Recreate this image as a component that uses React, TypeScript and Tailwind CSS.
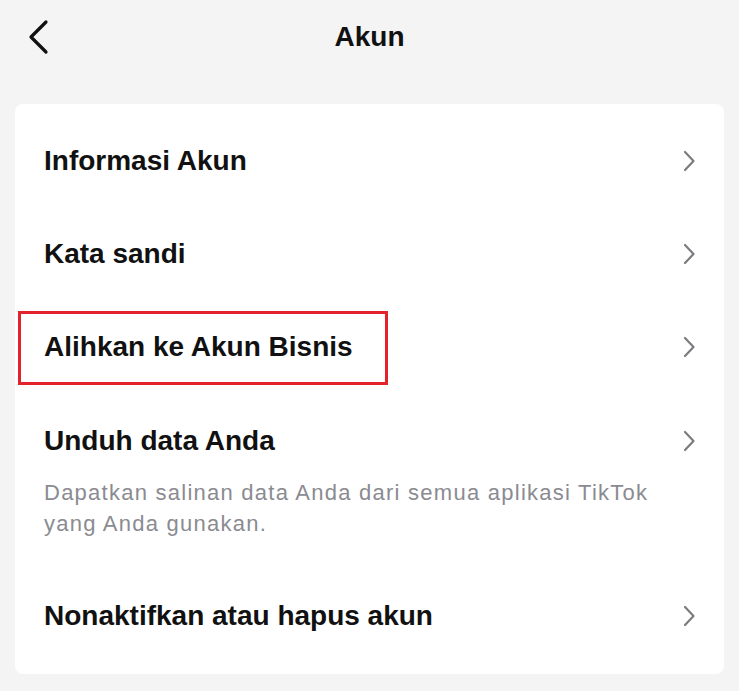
import { ReactNode } from "react";

type RowProps = {
    label: string;
    children?: ReactNode;
};

function Chevron() {
    return (
        <svg width="14" height="22" viewBox="0 0 14 22" fill="none" className="shrink-0">
            <path d="M3 2 L11.5 11 L3 20" stroke="#7c7c80" strokeWidth="2.2" strokeLinecap="round" strokeLinejoin="round" />
        </svg>
    );
}

function Row({ label, children }: RowProps) {
    return (
        <div className="relative flex h-[93px] items-center justify-between pl-[29px] pr-[28px]">
            <span className="text-[28px] font-bold leading-[32px] text-[#111111]">{label}</span>
            <Chevron />
            {children}
        </div>
    );
}

export default function App() {
    return (
        <div className="min-h-[691px] w-full bg-[#f4f4f4] font-['Liberation_Sans',Arial,sans-serif]">

            {/* header */}
            <div className="grid h-[74px] grid-cols-[1fr_auto_1fr] items-center">
                <button className="flex items-center pl-[28px]">
                    <svg width="22" height="36" viewBox="0 0 22 36" fill="none">
                        <path d="M18 3 L3 18 L18 33" stroke="#111111" strokeWidth="3.2" strokeLinecap="round" strokeLinejoin="round" />
                    </svg>
                </button>
                <h1 className="text-[28px] font-bold leading-[32px] text-[#111111]">Akun</h1>
                <div />
            </div>

            <div className="mx-[15px] mt-[30px] rounded-[8px] bg-white pb-[12px] pt-[10px]">
                <Row label="Informasi Akun" />
                <Row label="Kata sandi" />
                <Row label="Alihkan ke Akun Bisnis">
                    {/* highlight box */}
                    <div className="pointer-events-none absolute left-[3px] top-[11px] h-[74px] w-[370px] border-[3px] border-[#e3222b]" />
                </Row>

                <div className="pl-[29px] pr-[28px] pt-[32px]">
                    <div className="flex items-center justify-between">
                        <span className="text-[28px] font-bold leading-[32px] text-[#111111]">Unduh data Anda</span>
                        <Chevron />
                    </div>
                    <p className="mt-[20px] pr-[20px] text-[22px] leading-[31px] tracking-[1.25px] text-[#8a8b91]">
                        Dapatkan salinan data Anda dari semua aplikasi TikTok yang Anda gunakan.
                    </p>
                </div>

                <div className="mt-[30px]">
                    <Row label="Nonaktifkan atau hapus akun" />
                </div>
            </div>
        </div>
    );
}
